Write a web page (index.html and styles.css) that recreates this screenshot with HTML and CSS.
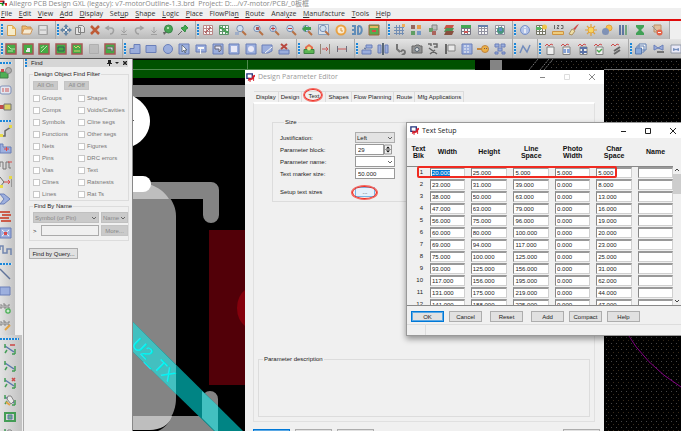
FILE: index.html
```html
<!DOCTYPE html>
<html lang="en">
<head>
<meta charset="utf-8">
<title>Allegro PCB Design GXL</title>
<link rel="stylesheet" href="styles.css">
</head>
<body>
<div class="app">
  <header class="titlebar">
    <svg class="logo" viewBox="0 0 8 6"><path fill="#d22" d="M0 0h5v2H0zM5 3h3v3H6z"/><path fill="#191" d="M0 3h4v3H2V4H0z"/><path fill="#224" d="M3 1h2v3H3z"/></svg>
    <span class="title">Allegro PCB Design GXL (legacy): v7-motorOutline-1.3.brd&nbsp; Project: D:.../v7-motor/PCB/_0板框</span>
  </header>
  <nav class="menu">
    <div class="menu-items">
      <a href="#"><u>F</u>ile</a><a href="#"><u>E</u>dit</a><a href="#"><u>V</u>iew</a><a href="#"><u>A</u>dd</a><a href="#"><u>D</u>isplay</a><a href="#">Set<u>u</u>p</a><a href="#"><u>S</u>hape</a><a href="#"><u>L</u>ogic</a><a href="#"><u>P</u>lace</a><a href="#">FlowPla<u>n</u></a><a href="#"><u>R</u>oute</a><a href="#">Anal<u>y</u>ze</a><a href="#"><u>M</u>anufacture</a><a href="#"><u>T</u>ools</a><a href="#"><u>H</u>elp</a>
    </div>
  </nav>
  <div class="toolbars">
    <div class="toolbar toolbar-main">
      <div class="group" data-icons="new open save"></div>
      <div class="group" data-icons="move copy delete undo down redo down pick pin"></div>
      <div class="group" data-icons="gridred gridgreen zoomfit zoompoints zoomin zoomout zoomprev zoomsel refresh threed board"></div>
      <div class="group" data-icons="grid colors layers stack tablegreen table world"></div>
      <div class="group" data-icons="info report ruler brush sun cloud bars hourglass stop"></div>
    </div>
    <div class="toolbar toolbar-edit">
      <div class="group" data-icons="pcb1 pcb2 pcb3 pcb4 pcb5 blank pcb6"></div>
      <div class="group" data-icons="poly rect circle cursor shapesel shapepoly square ring cut erase"></div>
      <div class="group" data-icons="mark dimin dim"></div>
      <div class="group" data-icons="place mirror wrench camera tools flag film gold net"></div>
      <div class="group" data-icons="wave"></div>
      <div class="group" data-icons="sheet sheetblue sheetgrid sheetok sheetpen"></div>
      <div class="group" data-icons="windows link winlink"></div>
    </div>
  </div>
  <main class="workspace">
    <aside class="rail">
      <div class="rail-group" data-icons="pcbball chip battery"></div>
      <div class="rail-group" data-icons="route slide meander spread arrows redlines matrix serp"></div>
      <div class="rail-group" data-icons="line rectfill abcadd abcedit"></div>
      <div class="rail-group wide" data-icons="rat1 rat2 rat3 rat4 rat5 rat4"></div>
    </aside>
    <section class="find">
      <h2 class="find-head"><span>Find</span>
        <svg class="find-ctl" viewBox="0 0 22 8"><path fill="#222" d="M2 1h3v3h1v1H4v2H3V5H1V4h1zM9 3h4l-2 2zM17 2h1l1 1 1-1h1v1L20 4l1 1v1h-1l-1-1-1 1h-1V5l1-1-1-1z"/></svg>
      </h2>
      <fieldset class="box filter">
        <legend>Design Object Find Filter</legend>
        <div class="all"><button class="btn off">All On</button><button class="btn off">All Off</button></div>
        <div class="checks">
          <label><input type="checkbox">Groups</label><label><input type="checkbox">Shapes</label>
          <label><input type="checkbox">Comps</label><label><input type="checkbox">Voids/Cavities</label>
          <label><input type="checkbox">Symbols</label><label><input type="checkbox">Cline segs</label>
          <label><input type="checkbox">Functions</label><label><input type="checkbox">Other segs</label>
          <label><input type="checkbox">Nets</label><label><input type="checkbox">Figures</label>
          <label><input type="checkbox">Pins</label><label><input type="checkbox">DRC errors</label>
          <label><input type="checkbox">Vias</label><label><input type="checkbox">Text</label>
          <label><input type="checkbox">Clines</label><label><input type="checkbox">Ratsnests</label>
          <label><input type="checkbox">Lines</label><label><input type="checkbox">Rat Ts</label>
        </div>
      </fieldset>
      <fieldset class="box byname">
        <legend>Find By Name</legend>
        <div class="name-grid">
          <select class="off" aria-label="Object type"><option>Symbol (or Pin)</option></select>
          <select class="off" aria-label="Match by"><option>Name</option></select>
          <label class="prompt">&gt;<input type="text"></label>
          <button class="btn off">More...</button>
        </div>
      </fieldset>
      <button class="btn query">Find by Query...</button>
    </section>
    <section class="canvas">
      <svg class="board" viewBox="133 59 548 372" preserveAspectRatio="xMinYMin slice">
        <defs><pattern id="dots" width="5" height="6" patternUnits="userSpaceOnUse"><path fill="#444" d="M1 1h1v1H1z"/><path fill="#382b1c" d="M3 4h1v1H3z"/></pattern></defs>
        <path fill="#000" d="M133 59h548v372H133z"/>
        <path fill="url(#dots)" d="M550 60h131v371H550z"/>
        <path fill="#005200" d="M133 60h342v18H133z"/>
        <path fill="none" stroke="#4f8a4f" d="M133 69.500h342M247.500 60v9"/>
        <path fill="#848484" d="M133 85h120v12H133zM490 60h12v18h-12z"/>
        <path fill="none" stroke="#777" stroke-dasharray="2 1" d="M529 70l9-11M540 70l9-11M544 70l9-11"/>
        <path stroke="#777" d="M604 69.500h77"/>
        <path fill="#fff" d="M133 96c11 6 17 15 17 25s-6 20-17 25z"/>
        <path fill="#555" d="M133 120h1v1h-1z"/>
        <path fill="#848484" d="M133 182h78a8 8 0 0 1 8 8v25a8 8 0 0 1-16 0v-16h-70z"/>
        <path fill="#848484" d="M133 184h16c15 4 27 17 27 32v182c0 18-11 32-30 32h-13z"/>
        <path fill="#bebebe" d="M133 184h16c9 3 16 8 20 15h-36zM133 416h40c-4 9-13 14-23 14h-17z"/>
        <path fill="#848484" d="M172 416h30v-17a8 8 0 0 1 16 0v32h-60c7-3 12-9 14-15z"/>
        <path fill="#fff" d="M133 176h10a8 8 0 0 1 0 16h-10z"/>
        <path fill="#520008" d="M209 230h38v155h-38z"/>
        <path fill="#84000c" d="M246 289q-9 7-9 19t9 19z"/>
        <path fill="#008484" d="M133 322l110 109h-29L133 352z"/>
        <path fill="#42c0c0" d="M133 322l43 43v29l-43-42zM202 391v27l13 13h3v-25z"/>
        <text class="net-label" x="0" y="0" transform="translate(131 345) rotate(45)">U2_TX</text>
        <path fill="none" stroke="#850085" d="M625 330q20 35 56 57"/>
      </svg>

      <div class="window editor">
        <div class="window-head inactive">
          <svg class="app-icon" viewBox="0 0 10 10"><path fill="#fff" stroke="#22347d" stroke-width="1.500" d="M1 1h6v5H1z"/><path fill="#d8202c" d="M3 5l2 1 2-1V3l3-1v2l-1 1v4H8V7L5 8v2H4V8L2 9z"/></svg>
          <span>Design Parameter Editor</span>
          <svg class="win-ctl" viewBox="0 0 56 8"><path fill="none" stroke="#888" d="M1 4.500h5M50 1l6 6M56 1l-6 6"/><path fill="none" stroke="#ddd" d="M25.500 1.500h5v5h-5z"/></svg>
        </div>
        <div class="tabs">
          <button>Display</button><button>Design</button><button class="current ringed">Text</button><button>Shapes</button><button>Flow Planning</button><button>Route</button><button>Mfg Applications</button>
        </div>
        <div class="pane">
          <fieldset class="box size">
            <legend>Size</legend>
            <div class="form">
              <label for="just">Justification:</label><select id="just" class="gray"><option>Left</option></select>
              <label for="block">Parameter block:</label><span class="spin"><input id="block" type="text" value="29"><svg class="spin-btn" viewBox="0 0 8 10"><path fill="#eee" stroke="#999" d="M.5.5h7v9h-7zM0 5h8"/><path fill="#000" d="M2 4l2-2 2 2zM2 6l2 2 2-2z"/></svg></span>
              <label for="pname">Parameter name:</label><select id="pname"><option></option></select>
              <label for="marker">Text marker size:</label><input id="marker" type="text" value="50.000">
              <label for="setup" class="setup-label">Setup text sizes</label><span class="setup ringed"><button id="setup" class="btn">...</button></span>
            </div>
          </fieldset>
          <fieldset class="box desc"><legend>Parameter description</legend></fieldset>
        </div>
        <div class="editor-foot"><button class="btn primary" aria-label="OK"></button><button class="btn" aria-label="Cancel"></button><button class="btn" aria-label="Apply"></button><button class="btn last" aria-label="Help"></button></div>
      </div>
    </section>
    <div class="window setup-win">
      <div class="window-head">
        <svg class="app-icon" viewBox="0 0 10 10"><path fill="#fff" stroke="#22347d" stroke-width="1.500" d="M1 1h6v5H1z"/><path fill="#d8202c" d="M3 5l2 1 2-1V3l3-1v2l-1 1v4H8V7L5 8v2H4V8L2 9z"/></svg>
        <span>Text Setup</span>
        <svg class="win-ctl" viewBox="0 0 56 8"><path fill="none" stroke="#222" d="M1 4.500h5M25.500 1.500h5v5h-5zM50 1l6 6M56 1l-6 6"/></svg>
      </div>
      <div class="sizes">
        <table>
          <thead><tr><th>Text<br>Blk</th><th>Width</th><th>Height</th><th>Line<br>Space</th><th>Photo<br>Width</th><th>Char<br>Space</th><th>Name</th></tr></thead>
          <tbody id="rows"></tbody>
        </table>
        <div class="scroll"><svg viewBox="0 0 8 6"><path fill="none" stroke="#444" d="M2 4l2-2 2 2"/></svg><i></i><svg viewBox="0 0 8 6"><path fill="none" stroke="#444" d="M2 2l2 2 2-2"/></svg></div>
      </div>
      <div class="setup-foot"><button class="btn primary">OK</button><button class="btn">Cancel</button><button class="btn">Reset</button><button class="btn">Add</button><button class="btn">Compact</button><button class="btn">Help</button></div>
      <div class="status"></div>
    </div>
  </main>
</div>
<script src="app.js"></script>
</body>
</html>
```
FILE: styles.css
```css
* { box-sizing: border-box; }
body { margin: 0; overflow: hidden; background: #f0f0f0; color: #222; font: 6px/8px "Liberation Sans", sans-serif; }
button, input, select { margin: 0; padding: 0; border: 0; border-radius: 0; font: inherit; color: inherit; outline: 0; }
svg { display: block; }
.app { display: flex; flex-direction: column; height: 100vh; }

.titlebar { display: flex; gap: 2px; height: 8px; flex: none; background: #fff; overflow: hidden; color: #888; font: 7px/8px "Open Sans", "Noto Sans CJK SC", sans-serif; white-space: nowrap; }
.logo { width: 7px; height: 6px; }
.menu { flex: none; height: 13px; padding: 0 1px; border-bottom: 2px solid #e00b0b; background: #efefef; font: 7px/11px "Open Sans", sans-serif; }
.menu-items { display: flex; justify-content: space-between; max-width: 390px; }
.menu a { color: #333; text-decoration: none; }

.toolbars { flex: none; background: #efefef; border-bottom: 1px solid #555; overflow: hidden; }
.toolbar { display: grid; height: 19px; }
.toolbar-main { grid-template-columns: 56px 140px 191px 126px 157px; height: 18px; }
.toolbar-edit { grid-template-columns: 123px 174px 58px 158px 25px 91px 60px; }
.group { display: flex; justify-content: space-between; align-items: center; padding: 0 6px 0 5px; background: linear-gradient(#e4e4e4, #bababa); border-right: 1px solid #aaa; }
.group::before { content: ""; width: 2px; height: 12px; margin: 0 -2px 0 -4px; background: repeating-linear-gradient(#1c86d8 0 2px, #cfe0ec 2px 3px); }
.tool { display: block; width: 12px; height: 12px; background: none; }
.tool svg { width: 12px; height: 12px; opacity: .85; }
.tool-down { width: 7px; }
.toolbar-main .group:nth-child(2) .tool { flex: 0 1 12px; }

.workspace { display: flex; flex: 1; min-height: 0; position: relative; }
.rail { width: 24px; flex: none; overflow: hidden; border-right: 1px solid #aaa; }
.rail-group { display: flex; flex-direction: column; align-items: center; gap: 5px; width: 15px; padding: 2px 3px 4px 0; background: linear-gradient(90deg, #e2e2e2, #c2c2c2); }
.rail-group::before { content: ""; width: 100%; height: 2px; flex: none; margin: 1px 0 -2px; background: repeating-linear-gradient(90deg, #1c86d8 0 2px, #cfe0ec 2px 3px); }
.rail-group.wide { width: 22px; padding-bottom: 20px; }
.rail .tool { flex: none; }

.find { width: 109px; flex: none; border-right: 1px solid #888; background: #f0f0f0; }
.find-head { display: flex; justify-content: space-between; align-items: center; height: 8px; margin: 0 4px 3px 1px; padding-left: 4px; background: #d6d6d6; border-left: 2px dotted #1c86d8; font-size: 6px; font-weight: normal; }
.find-ctl { width: 22px; height: 8px; }
.box { min-width: 0; margin: 0; padding: 0; border: 1px solid #dcdcdc; }
.box legend { margin-left: 4px; padding: 0 1px; height: 8px; }
.find .box { margin: 0 3px 0 5px; padding: 0 0 0 3px; }
.find .box legend { margin-left: 0; }
.btn { background: #e1e1e1; border: 1px solid #adadad; text-align: center; white-space: nowrap; }
.btn.off { background: #cacaca; border-color: #c4c4c4; color: #888; }
.btn.primary { border: 1px solid #0078d7; box-shadow: inset 0 0 0 1px #5ba8e4; }
.all { display: flex; gap: 6px; margin: 3px 0 2px; }
.all .btn { width: 25px; height: 9px; line-height: 7px; }
.checks { display: grid; grid-template-columns: 45px 1fr; grid-auto-rows: 12px; color: #777; }
.checks label { display: flex; align-items: center; gap: 2px; white-space: nowrap; }
.checks input { appearance: none; width: 7px; height: 7px; background: #fff; border: 1px solid #c8c8c8; }
.find .byname { margin-top: 1px; padding-bottom: 4px; }
.name-grid { display: grid; grid-template-columns: 66px 27px; grid-auto-rows: 11px; gap: 2px; margin-top: 2px; }
select { appearance: none; padding: 0 7px 0 1px; border: 1px solid #999; background: url("data:image/svg+xml,%3Csvg xmlns='http://www.w3.org/2000/svg' viewBox='0 0 6 4'%3E%3Cpath d='M1 1l2 2 2-2' fill='none' stroke='%23666'/%3E%3C/svg%3E") no-repeat right 1px center / 6px 4px #fff; }
select.off { background-color: #cacaca; border-color: #c0c0c0; color: #888; opacity: 1; }
select.gray { background-color: #e3e3e3; border-color: #adadad; }
.prompt { display: flex; gap: 4px; align-items: center; }
.prompt input { flex: 1; min-width: 0; height: 11px; background: #f0f0f0; border: 1px solid #aaa; }
.query { width: 49px; height: 11px; margin: 7px 0 0 5px; }

.canvas { flex: 1; position: relative; overflow: hidden; background: #000; }
.board { width: 100%; height: 100%; }
.net-label { font: 17px "Liberation Sans", sans-serif; fill: #00f4f4; }

.window { position: absolute; background: #f0f0f0; }
.window-head { display: flex; align-items: center; gap: 3px; height: 14px; padding: 0 9px 0 1px; background: #fff; font: 7px/12px "Open Sans", sans-serif; color: #222; }
.window-head.inactive { color: #999; }
.app-icon { width: 9px; height: 9px; }
.win-ctl { width: 56px; height: 8px; margin-left: auto; }
.editor { left: 112px; right: 77px; top: 11px; bottom: 0; display: flex; flex-direction: column; overflow: hidden; }
.tabs { display: flex; height: 18px; padding: 7px 0 0 9px; }
.tabs button { position: relative; padding: 0 2px; border: 1px solid #dcdcdc; border-bottom: 0; border-left: 0; background: #f0f0f0; white-space: nowrap; }
.tabs .current { padding: 0 6px 2px; }
.ringed { position: relative; }
.ringed::after { content: ""; position: absolute; inset: -3px 3px 1px 2px; border: 1px solid #f02a20; border-radius: 50%; box-shadow: 0 0 0 1px #f4675f; }
.pane { flex: 1; display: flex; flex-direction: column; justify-content: space-between; margin: 0 9px 0 8px; padding: 14px 4px 4px; border: 1px solid #e0e0e0; border-top: 2px solid #fff; }
.size { margin: 0 152px 0 14px; padding: 0 7px 10px; }
.form { display: grid; grid-template-columns: 75px 40px; grid-auto-rows: 11px; row-gap: 1px; align-items: center; margin-top: 6px; }
.form input, .form select { width: 100%; height: 11px; }
.form input { padding: 0 2px; background: #fff; border: 1px solid #999; }
.spin { display: flex; width: 37px; }
.spin-btn { width: 8px; height: 11px; flex: none; }
.setup, .setup-label { margin-top: 12px; }
.setup .btn { display: block; width: 20px; height: 10px; line-height: 6px; background: #e5f1fb; border-color: #78b4e4; }
.setup.ringed::after { inset: -1px 18px -2px -3px; }
.desc { height: 62px; margin: 0; }
.editor-foot { display: flex; gap: 5px; height: 9px; padding: 7px 4px 0 8px; }
.editor-foot .btn { width: 37px; height: 12px; flex: none; }
.editor-foot .last { margin-left: auto; }

.setup-win { left: 406px; right: 0; top: 63px; border: 1px solid #999; border-right: 0; box-shadow: 0 3px 6px rgba(0, 0, 0, .4); }
.setup-win .window-head { height: 15px; padding: 0 5px 0 3px; }
.sizes { display: flex; height: 168px; overflow: hidden; border-bottom: 1px solid #888; }
.sizes table { flex: 1; border-collapse: collapse; table-layout: fixed; height: max-content; }
.sizes th { height: 28px; padding: 0 6px 0 0; font: bold 7px/7px "Liberation Sans", sans-serif; color: #111; }
.sizes th:first-child { width: 23px; padding: 0; }
.sizes th:last-child { width: 35px; padding: 0; }
.sizes td { height: 12px; padding: 0 6px 0 0; }
.sizes td:first-child { padding: 0 7px 0 0; text-align: right; }
.sizes thead { border-bottom: 1px solid #888; }
.sizes td input { display: block; width: 100%; height: 11px; padding: 0 1px; background: #fff; border: 1px solid #d0d0d0; border-top: 2px solid #999; border-left-color: #888; }
.sizes td:last-child { padding-right: 0; }
.marked { position: relative; }
.marked td:first-child::after { content: ""; position: absolute; inset: 0 56px 0 10px; border: 2px solid #f02a20; border-radius: 2px; pointer-events: none; }
.sizes input::selection { background: #0078d7; color: #fff; }
.scroll { width: 8px; margin-top: 28px; display: flex; flex-direction: column; background: #f0f0f0; }
.scroll svg { width: 8px; height: 8px; flex: none; }
.scroll i { height: 20px; margin-bottom: auto; background: #cdcdcd; }
.setup-foot { display: flex; gap: 5px; padding: 5px 4px 2px; }
.setup-foot .btn { width: 33px; height: 11px; flex: none; }
.setup-foot .btn:nth-child(3), .setup-foot .btn:nth-child(4) { margin-left: 3px; }
.status { height: 11px; border-top: 1px solid #ddd; }
.status::before { content: ""; display: block; width: 18px; height: 100%; border-right: 1px solid #ddd; }
```
FILE: app.js
```js
// 12x12 toolbar glyphs
const mag = extra => `<path stroke="#b5622d" stroke-width="2" d="M7 7l4 4"/><circle cx="5" cy="4.500" r="3.200" fill="#cfe2f5" stroke="#6d87b0"/>${extra}`;
const pcb = extra => `<path fill="#2ea62e" stroke="#a34343" stroke-width="1.500" d="M1 1h10v10H1z"/>${extra}`;
const blue = d => `<path fill="#93a9e0" stroke="#5871b4" d="${d}"/>`;
const sheet = extra => `<path fill="#f5f5f5" stroke="#777" d="M3 4h7v7.500H3z"/><path fill="none" stroke="#c33" d="M1 3l2-2 2 2 2-2 2 1"/>${extra}`;
const grid = (c, extra = '') => `<path fill="#fff" stroke="${c}" d="M1.500 1.500h9v9h-9zM4.500 1v10M7.500 1v10M1 4.500h10M1 7.500h10"/>${extra}`;
const rat = extra => `<path fill="none" stroke="#4668a5" stroke-width="1.500" d="M1 3l9 6"/><path fill="none" stroke="#2b9440" stroke-width="1.500" d="M1 1v4M11 6v5M1 10l2-3M8 11h3"/>${extra}`;
const glyphs = {
  new: '<path fill="#fff2c9" stroke="#d39a3c" d="M2.500 1.500h5l3 3v7h-8z"/><path fill="#f3b74e" d="M7 1l4 4H7z"/>',
  open: '<path fill="#f6b65e" stroke="#c07f35" d="M1 10V2h4l1 1h4v2"/><path fill="#fff1d6" stroke="#d08f48" d="M1 10l2-5h8.500l-2 5z"/>',
  save: '<path fill="#c2c2c2" stroke="#999" d="M1.500 1.500h9v9h-9z"/><path fill="#e5e5e5" d="M3 2h6v3H3zM3 7h6v3H3z"/>',
  move: '<path fill="#52799f" d="M6 0l2.500 3H7v2h2V3.500L12 6 9 8.500V7H7v2h1.500L6 12 3.500 9H5V7H3v1.500L0 6l3-2.500V5h2V3H3.500z"/><path fill="#fff" d="M5 5h2v2H5z"/>',
  copy: '<path fill="#e8e8e8" stroke="#777" d="M4.500 1.500h4l2 2v5h-6zM1.500 3.500h5v7h-5z"/>',
  delete: '<path stroke="#bd481c" stroke-width="2.500" d="M2 2l8 8M10 2l-8 8"/>',
  undo: '<path fill="none" stroke="#999" stroke-width="1.500" d="M5 2L2 4l3 2M2 4h5c4 0 3 6-1 6"/>',
  redo: '<path fill="none" stroke="#999" stroke-width="1.500" d="M7 2l3 2-3 2M10 4H5c-4 0-3 6 1 6"/>',
  down: '<path fill="none" stroke="#999" d="M6 3v6M3.500 6.500L6 9l2.500-2.500M3 10.500h6"/>',
  pick: '<circle cx="6.500" cy="5" r="4" fill="#2f9c3d" stroke="#207a34"/><path fill="#a9e1a7" d="M5 3h2v2H5z"/><path fill="#555" d="M1 8h4l-3 3z"/>',
  pin: '<path stroke="#555" d="M1 11l4-4"/><path fill="#2ca63c" stroke="#178029" d="M4 4l4 4 1-3 2-1-3-3-1 2z"/>',
  gridred: grid('#b77c7c', '<path stroke="#a44" d="M3 9l6-6"/>'), gridgreen: grid('#4b8a5b', '<path stroke="#2c9b3c" stroke-width="2" d="M2 3l8 6"/>'),
  zoomfit: mag('<path fill="#98a9c8" d="M0 8h4v3H0z"/>'), zoompoints: mag('<path fill="#a44" d="M4 3h3v3H4z"/>'),
  zoomin: mag('<path stroke="#b22" d="M5 2.500v4M3 4.500h4"/>'), zoomout: mag('<path stroke="#b22" d="M3 4.500h4"/>'),
  zoomprev: mag('<path fill="#2a963b" d="M1 5l4-4v2h5v3H5v2z"/>'), zoomsel: '<path fill="#dde6f1" stroke="#7f9bbf" d="M.5.5h10v10H.5z"/>' + mag(''),
  refresh: '<circle cx="6" cy="6" r="4.500" fill="#fff0d6" stroke="#ef9b2c" stroke-width="2"/><path fill="none" stroke="#dd8b21" d="M6 4v3h2"/>',
  threed: '<path fill="none" stroke="#4f82b5" stroke-width="2" d="M1 2h3v8H1M1 6h3M7 2v8c5 1 5-9 0-8"/>',
  board: '<path fill="#46a53a" stroke="#995425" d="M1 1h10v10H1z"/><path fill="#e9b34b" d="M2 2h8v2H2z"/><path fill="#d33" d="M4 6h4v2H4z"/>',
  grid: '<path fill="none" stroke="#6484b0" d="M3.500 1v10M6.500 1v10M9.500 3v8M1 3.500h10M1 6.500h10M1 9.500h10"/><path fill="#f5a746" d="M9 0h3v3H9z"/>',
  colors: '<path fill="#8b534b" d="M1 1h4v4H1z"/><path fill="#e89336" d="M7 1h4v4H7z"/><path fill="#4e9751" d="M1 7h4v4H1z"/><path fill="#688fc5" d="M7 7h4v4H7z"/>',
  layers: '<path fill="#bbb" stroke="#777" d="M5 1h5v5H5z"/><path fill="#58965c" d="M2 4h4v4H2z"/><path fill="#a6534a" d="M5 7h4v4H5z"/>',
  stack: '<path fill="#c83f2f" d="M3 1h8L9 5H1z"/><path fill="#398b42" d="M3 4h8L9 8H1z"/><path fill="#7d3b27" d="M3 7h8l-2 4H1z"/>',
  tablegreen: grid('#667', '<path fill="#2a9f3d" d="M1 1h10v3H1z"/><path fill="#c44" d="M4 7h4v2H4z"/>'), table: grid('#889', '<path fill="#5271a4" d="M1 1h10v2H1z"/>'), world: grid('#889', '<circle cx="6.500" cy="6.500" r="3.500" fill="#338a72"/><path fill="#4e83c7" d="M5 4h3v3H5z"/>'),
  info: '<circle cx="6" cy="6" r="4.500" fill="#afc2ed" stroke="#6986c7"/><path stroke="#fff" stroke-width="1.500" d="M6 5v4M6 2.500V4"/>',
  report: grid('#665', '<path fill="#43ad4e" d="M1 3h5v3H1z"/><circle cx="9.500" cy="3" r="2.500" fill="#f3c333"/>'),
  ruler: '<path fill="#f5ce70" stroke="#d08a29" d="M.5 7.500h11v3H.5z"/><path fill="none" stroke="#555" d="M2.500 1v4M5 1.500h2L5 4.500h2M9 1.500h2v3H9"/>',
  brush: '<path fill="#c33" d="M11 0L7 6 5 5 9 1z"/><path fill="#f5e3a1" stroke="#a98950" d="M4 5l3 2-3 4-3-1z"/>',
  sun: '<path stroke="#e39b27" stroke-width="1.200" d="M6 0v12M0 6h12M2 2l8 8M10 2l-8 8"/><circle cx="6" cy="6" r="3" fill="#ffd84c" stroke="#e89e28"/>',
  cloud: '<circle cx="8" cy="4" r="3" fill="#fcc33c" stroke="#e39b27"/><circle cx="4.500" cy="7.500" r="3.500" fill="#7388b2"/>',
  bars: '<path fill="#4c679a" d="M1 1h2v10H1zM4 1h2v10H4z"/><path fill="#67a073" d="M7 1h2v10H7z"/><path fill="#bcc" d="M10 1h1v10h-1z"/>',
  hourglass: '<path fill="#2a9a43" d="M2 1h8v2L7 6l3 3v2H2V9l3-3-3-3z"/>',
  stop: '<path fill="#e3bd94" stroke="#b78555" d="M3 1h7v7H3z"/><path stroke="#888" d="M1 2l6 6"/><circle cx="8.500" cy="8.500" r="3" fill="#e85132"/><path stroke="#fff" d="M7 8.500h3"/>',
  pcb1: pcb('<path stroke="#b9e6a5" d="M3 3l3 3h4M3 8h5"/>'), pcb2: pcb('<path fill="#eee" d="M5 5h3v4H4V7h1z"/>'), pcb3: pcb('<path stroke="#b9e6a5" d="M3 9l6-6M3 5l3-2"/>'),
  pcb4: pcb('<path fill="none" stroke="#174d3f" d="M3 4h6v4H3z"/>'), pcb5: pcb('<path stroke="#d8d45a" fill="none" d="M3 3l2 2 2-2 2 2M3 8h6"/>'), pcb6: pcb('<path fill="#ddd" stroke="#555" d="M3 4h6v4H7V6H3z"/>'),
  blank: '<path fill="#bbb" stroke="#aaa" d="M1.500 1.500h9v9h-9z"/>',
  poly: blue('M5 1.500h6v9H1v-5h4z'), rect: blue('M1 2.500h10v7H1z'), circle: '<circle cx="6" cy="6" r="4.500" fill="#93a9e0" stroke="#5871b4"/>',
  cursor: blue('M1 1h10v10H1z') + '<path fill="#fff" stroke="#345" stroke-width=".7" d="M4 2v7l2-2 1 3 1-1-1-2h2z"/>',
  shapesel: blue('M1 2h10v7H1z') + '<path fill="#fff" d="M3 4h6v2H6v5H5V6H3z"/>', shapepoly: blue('M1 1h10v10H1z') + '<path fill="#eef" stroke="#556" d="M3 3h6v4L7 9V6H3z"/>',
  square: blue('M1 1h10v10H1z') + '<path fill="#eef" d="M3 3h6v6H3z"/>', ring: blue('M1 1h10v10H1z') + '<circle cx="6" cy="6" r="3" fill="#eef"/>',
  cut: blue('M1 2h10v6L7 10H1z') + '<path stroke="#fff" d="M4 10l7-6"/>', erase: blue('M1 7h10v4H1z') + '<path stroke="#b32f25" stroke-width="2" d="M3 1l6 5M9 1L3 6"/>',
  mark: '<path fill="#e75a33" d="M2 4l4-3 4 3v3H2z"/><path fill="#49b33f" stroke="#26772b" d="M1 6.500h10v4H1z"/><circle cx="6" cy="5.500" r="2" fill="#e9e28a"/>',
  dimin: '<path fill="none" stroke="#876" d="M1.500 1v10M10.500 1v10"/><path stroke="#c44" d="M3 6h6M7 4l2 2-2 2"/>', dim: '<path fill="none" stroke="#5c5c6d" d="M1.500 3v6M10.500 3v6"/><path stroke="#c44" d="M2 6h8"/>',
  place: blue('M1 7h9v4H1zM5 2h6v3H5z') + '<path stroke="#35528d" d="M3 5l2 1"/>', mirror: blue('M1 2h3v8H1zM8 2h3v8H8z') + '<path stroke="#456" stroke-width="2" d="M6 0v12"/>',
  wrench: '<path fill="none" stroke="#666" stroke-width="2" d="M3 1v5l3 3M7 9c1-3 4-2 4 0s-2 3-3 2"/>', camera: '<path fill="#888" stroke="#555" d="M1 3h3l1-1h3l1 1h2v7H1z"/><circle cx="6" cy="6.500" r="2" fill="#ddd" stroke="#456"/>',
  tools: '<path fill="none" stroke="#555" stroke-width="1.500" d="M1 1h3v2M6 1h4v3H7M2 5l8 6M8 7l-5 4"/>', flag: '<path fill="#eee" stroke="#777" d="M4 2h7v6H4z"/><path stroke="#555" stroke-width="2" d="M2 1v10"/>',
  film: blue('M1 1h10v10H1z') + '<path stroke="#fff" stroke-dasharray="2 1" d="M3 3h6M3 6h6M3 9h6"/>', gold: '<path stroke="#c77b22" stroke-width="2" d="M0 6h5"/><circle cx="8" cy="6" r="3.500" fill="#f2ac2f" stroke="#bd7728"/><path fill="#644" d="M7 5h1v1H7zM9 5h1v1H9z"/>',
  net: blue('M1 1h4v3H1zM7 1h4v3H7zM4 5h4v3H4zM1 9h3v2H1zM8 9h3v2H8z'), wave: '<path fill="none" stroke="#6381ba" stroke-width="1.500" d="M1 10l3-7 4 6 3-7"/>',
  sheet: sheet(''), sheetblue: sheet('<path fill="#7d9cd6" d="M3 6h3v4H3zM7 6h3v4H7z"/>'), sheetgrid: sheet('<path stroke="#4863a1" stroke-width="2" d="M3 5h7M6 5v6M3 9h7"/>'),
  sheetok: sheet('<path fill="none" stroke="#39a33d" stroke-width="1.500" d="M4 7l2 2 3-3"/>'), sheetpen: '<path fill="none" stroke="#c33" d="M1 3l2-2 2 2 2-2 2 1"/><path stroke="#555" stroke-width="2" d="M4 8l6-4M4 11l6-4"/>',
  windows: '<path fill="#fff" stroke="#486eac" d="M4 1h7v6H4zM2 3h7v6H2z"/><path fill="#7fa4dd" stroke="#486eac" d="M.5 5h6v6h-6z"/>', link: blue('M1 2l4 3 5-3v5L5 5 1 7z') + '<path stroke="#666" stroke-width="2" d="M4 9h7"/>',
  winlink: '<path fill="#eef" stroke="#8890a0" d="M1 2h10v8H1z"/><path fill="#6685bb" d="M3 5l3 1 3-1v3L6 7 3 8z"/>',
  pcbball: '<path fill="#37a83d" stroke="#286d31" d="M0 5h8v6H0z"/><circle cx="8.500" cy="3.500" r="3" fill="#aaa" stroke="#777"/><path fill="#c33" d="M1 2h3v3H1z"/>',
  chip: '<rect x="0" y="2" width="11" height="8" rx="2" fill="#e6e9f3" stroke="#7387b5"/><path stroke="#c44" d="M3 4v4M6 4v4M8 4v4"/>', battery: '<path fill="#b33" d="M0 4h4v4H0z"/><path fill="#ddd04c" stroke="#666" d="M4 3h7v6H4z"/>',
  route: '<path fill="none" stroke="#555" stroke-width="1.500" d="M1 11h4V6l6-4"/><path fill="#eadb30" d="M0 9h3v3H0zM9 0h3v3H9z"/>', slide: blue('M0 2h3v3h8v6H0z') + '<path stroke="#d33" d="M4 7h5M6.500 5v4"/>',
  meander: '<path fill="none" stroke="#666" d="M0 8V3h3v7h3V3h3v6h2"/><path stroke="#d33" d="M8 3h4"/>', spread: '<path fill="none" stroke="#555" d="M0 1l4 5-4 5M12 1v10"/><path stroke="#d33" d="M4 6h6M8 4l2 2-2 2"/><path fill="#eadb30" d="M9 0h3v3H9zM0 9h3v3H0z"/>',
  arrows: blue('M0 1h4l6 5-6 5H0l4-5z'), redlines: '<path stroke="#cb4631" stroke-width="2" d="M0 2h10M2 5h9M0 8h9M1 11h10"/>',
  matrix: blue('M0 1h11v10H0z') + '<path stroke="#fff" d="M2 3l7 6M9 3L2 9"/><path fill="#d33" d="M4 5h3v3H4z"/>', serp: '<path fill="none" stroke="#617aa9" stroke-width="1.500" d="M0 6V2h3v7h4V5h4v6"/>',
  line: '<path stroke="#4c638f" stroke-width="1.500" d="M0 1l10 10"/>', rectfill: blue('M0 2h10v8H0z'),
  abcadd: '<path fill="none" stroke="#777" d="M0 3h2v3H0V4M4 1v5h2V3H4M10 3H8v3h2"/><circle cx="8" cy="9" r="2.800" fill="#35ab43"/><path stroke="#fff" d="M6.500 9h3M8 7.500v3"/>',
  abcedit: '<path fill="none" stroke="#777" d="M0 3h2v3H0V4M4 1v5h2V3H4M10 3H8v3h2"/><path stroke="#e39a2c" stroke-width="2" d="M5 11l5-5"/>',
  rat1: rat('<path stroke="#c55" stroke-width="2" d="M6 2h5"/>'), rat2: rat(''), rat3: rat('<path stroke="#c33" stroke-width="1.500" d="M8 1l3 3M11 1L8 4"/>'), rat4: rat('<path fill="#eee" stroke="#777" d="M4 2h3l3 5-3 3-4-5z"/><path stroke="#e39a2c" stroke-width="2" d="M2 8l4 3"/>'),
  rat5: '<path fill="none" stroke="#2b9440" stroke-width="2" d="M1 1v10M11 1v10M1 2h10M1 10h10"/><path fill="#5ba873" stroke="#4668a5" d="M4 4h4v4H4z"/>'
};

document.querySelectorAll('[data-icons]').forEach(group => {
  group.dataset.icons.split(' ').forEach(name => {
    group.insertAdjacentHTML('beforeend', `<button class="tool tool-${name}" aria-label="${name}"><svg viewBox="0 0 12 12" fill="none">${glyphs[name]}</svg></button>`);
  });
});

// width, height, line space, photo width, char space
const sizes = [
  [20, 25, 5, 5, 5], [23, 31, 39, 0, 8], [38, 50, 63, 0, 13], [47, 63, 79, 0, 16],
  [56, 75, 96, 0, 19], [60, 80, 100, 0, 20], [69, 94, 117, 0, 23], [75, 100, 125, 0, 25],
  [93, 125, 156, 0, 31], [117, 156, 195, 0, 62], [131, 175, 219, 0, 44], [141, 188, 235, 0, 47]
];
const fields = ['Width', 'Height', 'Line space', 'Photo width', 'Char space', 'Name'];
document.getElementById('rows').innerHTML = sizes.map((row, i) =>
  `<tr${i ? '' : ' class="marked"'}><td>${i + 1}</td>${fields.map((f, c) =>
    `<td><input type="text" aria-label="${f} ${i + 1}" value="${c < 5 ? row[c].toFixed(3) : ''}"></td>`).join('')}</tr>`).join('');
const first = document.querySelector('#rows input');
first.focus({ preventScroll: true });
first.select();
```
